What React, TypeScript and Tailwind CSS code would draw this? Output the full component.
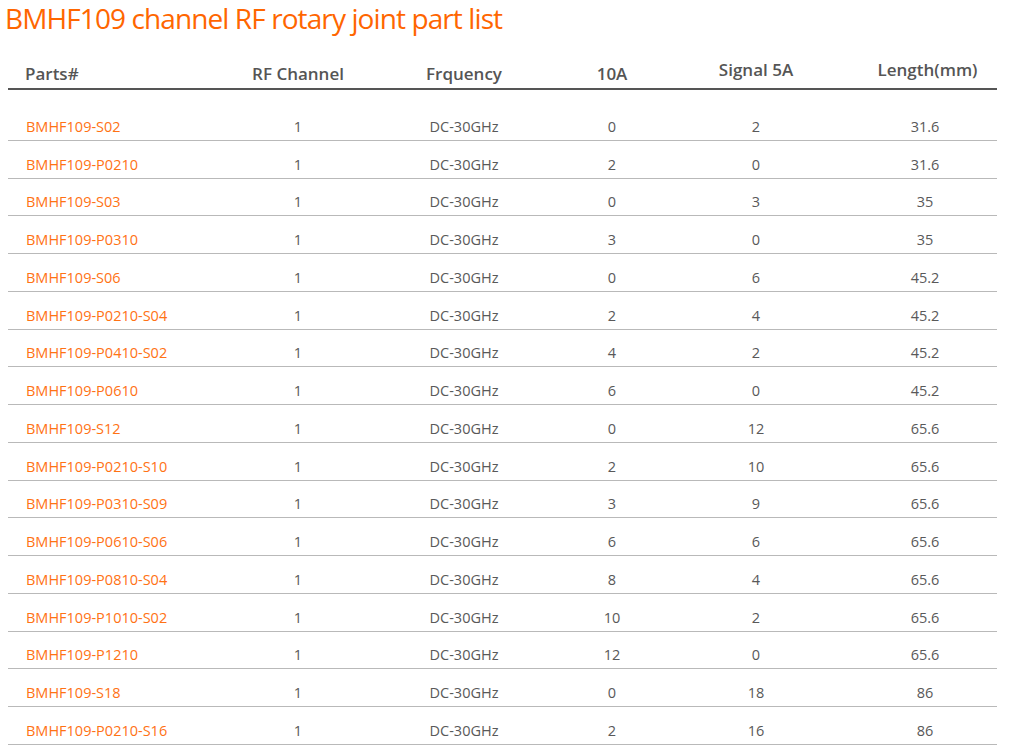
type Part = {
  name: string
  channel: number
  freq: string
  a10: number
  s5: number
  length: string
}

const parts: Part[] = [
  { name: 'BMHF109-S02', channel: 1, freq: 'DC-30GHz', a10: 0, s5: 2, length: '31.6' },
  { name: 'BMHF109-P0210', channel: 1, freq: 'DC-30GHz', a10: 2, s5: 0, length: '31.6' },
  { name: 'BMHF109-S03', channel: 1, freq: 'DC-30GHz', a10: 0, s5: 3, length: '35' },
  { name: 'BMHF109-P0310', channel: 1, freq: 'DC-30GHz', a10: 3, s5: 0, length: '35' },
  { name: 'BMHF109-S06', channel: 1, freq: 'DC-30GHz', a10: 0, s5: 6, length: '45.2' },
  { name: 'BMHF109-P0210-S04', channel: 1, freq: 'DC-30GHz', a10: 2, s5: 4, length: '45.2' },
  { name: 'BMHF109-P0410-S02', channel: 1, freq: 'DC-30GHz', a10: 4, s5: 2, length: '45.2' },
  { name: 'BMHF109-P0610', channel: 1, freq: 'DC-30GHz', a10: 6, s5: 0, length: '45.2' },
  { name: 'BMHF109-S12', channel: 1, freq: 'DC-30GHz', a10: 0, s5: 12, length: '65.6' },
  { name: 'BMHF109-P0210-S10', channel: 1, freq: 'DC-30GHz', a10: 2, s5: 10, length: '65.6' },
  { name: 'BMHF109-P0310-S09', channel: 1, freq: 'DC-30GHz', a10: 3, s5: 9, length: '65.6' },
  { name: 'BMHF109-P0610-S06', channel: 1, freq: 'DC-30GHz', a10: 6, s5: 6, length: '65.6' },
  { name: 'BMHF109-P0810-S04', channel: 1, freq: 'DC-30GHz', a10: 8, s5: 4, length: '65.6' },
  { name: 'BMHF109-P1010-S02', channel: 1, freq: 'DC-30GHz', a10: 10, s5: 2, length: '65.6' },
  { name: 'BMHF109-P1210', channel: 1, freq: 'DC-30GHz', a10: 12, s5: 0, length: '65.6' },
  { name: 'BMHF109-S18', channel: 1, freq: 'DC-30GHz', a10: 0, s5: 18, length: '86' },
  { name: 'BMHF109-P0210-S16', channel: 1, freq: 'DC-30GHz', a10: 2, s5: 16, length: '86' }
]

export default function App() {
  return (
    <div className="min-h-[754px] w-[1011px] bg-white font-['Open_Sans',sans-serif]">
      <h1 className="pl-[5px] text-[28px] leading-[36px] tracking-[-0.9px] text-[#ff6600]">
        BMHF109 channel RF rotary joint part list
      </h1>

      <div className="mx-[8px] w-[989px]">
        <div className="flex h-[54px] items-end border-b-2 border-[#555555] pb-[3px] text-[17px] leading-[22px] font-semibold text-[#555555]">
          <div className="w-[192px] pl-[17px]">Parts#</div>
          <div className="w-[196px] text-center">RF Channel</div>
          <div className="w-[136px] text-center">Frquency</div>
          <div className="w-[160px] text-center">10A</div>
          <div className="mb-[4px] w-[128px] text-center">Signal 5A</div>
          <div className="mb-[4px] w-[177px] pl-[38px] text-center">Length(mm)</div>
        </div>

        <div className="mt-[13px]">
          {parts.map((p) => (
            <div
              key={p.name}
              className="flex h-[37.75px] items-end border-b border-[#b9b9b9] pb-[3px] text-[14.5px] leading-[20px] text-[#595959]"
            >
              <div className="w-[192px] pl-[18px] text-[#ff7214]">{p.name}</div>
              <div className="w-[196px] text-center">{p.channel}</div>
              <div className="w-[136px] text-center">{p.freq}</div>
              <div className="w-[160px] text-center">{p.a10}</div>
              <div className="w-[128px] text-center">{p.s5}</div>
              <div className="w-[177px] pl-[33px] text-center">{p.length}</div>
            </div>
          ))}
        </div>
      </div>
    </div>
  )
}
